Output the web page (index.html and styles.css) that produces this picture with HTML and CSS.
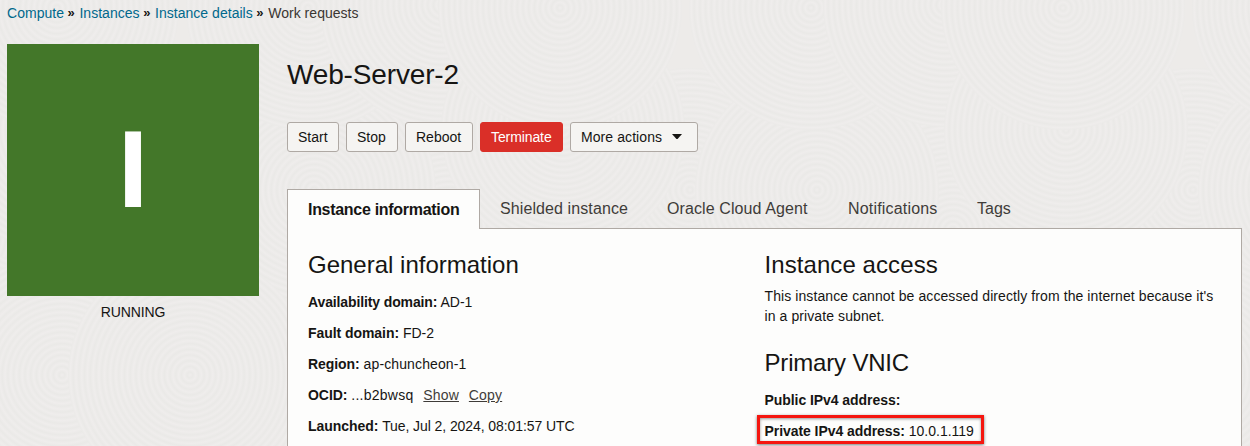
FILE: index.html
```html
<!DOCTYPE html>
<html lang="en">
<head>
<meta charset="utf-8">
<title>Web-Server-2</title>
<link rel="stylesheet" href="styles.css">
</head>
<body>
<svg class="texture" width="1250" height="446" aria-hidden="true">
  <defs>
    <radialGradient id="rings" gradientUnits="userSpaceOnUse" cx="0" cy="0" r="5.7" spreadMethod="repeat">
      <stop offset="0" stop-color="#efedec"/>
      <stop offset=".5" stop-color="#eae9e7"/>
      <stop offset="1" stop-color="#efedec"/>
    </radialGradient>
    <circle id="disc" r="122" fill="url(#rings)"/>
    <g id="tile">
      <use href="#disc" x="450" y="230"/>
      <use href="#disc" x="330" y="320"/>
      <use href="#disc" x="460" y="370"/>
      <use href="#disc" x="187" y="190"/>
      <use href="#disc" x="314" y="190"/>
      <use href="#disc" x="60" y="130"/>
      <use href="#disc" x="290" y="480"/>
      <use href="#disc" x="62" y="375"/>
      <use href="#disc" x="190" y="375"/>
      <use href="#disc" x="57" y="8"/>
      <use href="#disc" x="308" y="8"/>
      <use href="#disc" x="442" y="5"/>
    </g>
  </defs>
  <use href="#tile" x="-503"/>
  <use href="#tile"/>
  <use href="#tile" x="503"/>
  <use href="#tile" x="1006"/>
</svg>
<nav class="crumbs">
  <a>Compute</a><b>»</b><a>Instances</a><b>»</b><a>Instance details</a><b>»</b><span>Work requests</span>
</nav>
<div class="layout">
  <aside class="status">
    <div class="tile">I</div>
    <p>RUNNING</p>
  </aside>
  <main class="main">
    <h1>Web-Server-2</h1>
    <div class="actions">
      <button class="start">Start</button>
      <button class="stop">Stop</button>
      <button class="reboot">Reboot</button>
      <button class="danger">Terminate</button>
      <button class="more">More actions <svg width="10" height="6" viewBox="0 0 10 6"><path d="M0 0h10L6 4.5Q5 5.5 4 4.5z" fill="#161513"/></svg></button>
    </div>
    <div class="tabs">
      <div class="tab active"><span>Instance information</span></div>
      <div class="tab t2"><span>Shielded instance</span></div>
      <div class="tab t3"><span>Oracle Cloud Agent</span></div>
      <div class="tab t4"><span>Notifications</span></div>
      <div class="tab t5"><span>Tags</span></div>
    </div>
    <div class="panel">
      <section class="col general">
        <h2>General information</h2>
        <p><b class="avail">Availability domain:</b> AD-1</p>
        <p><b>Fault domain:</b> FD-2</p>
        <p><b>Region:</b> <span class="region">ap-chuncheon-1</span></p>
        <p><b>OCID:</b> <span class="ocid">...b2bwsq</span> <a>Show</a> <a>Copy</a></p>
        <p><b>Launched:</b> <span class="tight">Tue, Jul 2, 2024, 08:01:57 UTC</span></p>
      </section>
      <section class="col access">
        <h2>Instance access</h2>
        <div class="note">This instance cannot be accessed directly from the internet because it's<br>in a private subnet.</div>
        <h2 class="vnic">Primary VNIC</h2>
        <p><b>Public IPv4 address:</b></p>
        <p class="marked"><b>Private IPv4 address:</b> 10.0.1.119</p>
      </section>
    </div>
  </main>
</div>
</body>
</html>
```
FILE: styles.css
```css
* { box-sizing: border-box; }
body {
  margin: 0;
  width: 1250px;
  height: 446px;
  overflow: hidden;
  background: #edebe9;
  font-family: "Liberation Sans", Arial, sans-serif;
  font-size: 14px;
  line-height: 20px;
  color: #161513;
}
.texture { position: absolute; inset: 0; z-index: -1; }
p, h1, h2 { margin: 0; font-weight: 400; }
.crumbs { display: flex; height: 44px; padding: 3px 0 0 7px; color: #3a3632; letter-spacing: .03px; white-space: nowrap; }
.crumbs a { color: #00688c; }
.crumbs b { width: 15.4px; padding-left: 3.5px; font-size: 13px; color: #161513; }
.layout { display: flex; gap: 28px; padding-left: 7px; }
.status { width: 252px; text-align: center; }
.status p { padding-top: 6px; letter-spacing: -.1px; }
.tile {
  height: 252px;
  background: #437729;
  color: #fff;
  font-size: 110px;
  font-weight: 700;
  line-height: 249px;
}
.main { width: 955px; }
h1 { height: 78px; padding-top: 14px; font-size: 28px; line-height: 34px; letter-spacing: -.15px; }
.actions { display: flex; gap: 7px; height: 67px; }
.actions button {
  height: 30px;
  padding: 0 10px;
  border: 1px solid #afa9a4;
  border-radius: 3px;
  background: #f5f4f2;
  font: inherit;
  color: #161513;
  white-space: nowrap;
  text-align: left;
}
.actions .start, .actions .stop { width: 52px; }
.actions .reboot { width: 68px; }
.actions .danger { width: 83px; border-color: #da2f28; background: #da2f28; color: #fff; letter-spacing: -.1px; }
.actions .more { display: flex; align-items: center; justify-content: space-between; width: 128px; padding-right: 15px; letter-spacing: .08px; }
.tabs { display: flex; height: 40px; font-size: 16px; color: #3f3c39; letter-spacing: .1px; }
.tab { height: 40px; padding: 10px 20px 0; white-space: nowrap; }
.tab.active {
  z-index: 1;
  width: 193px;
  border: 1px solid #afa9a4;
  border-bottom: 0;
  background: #fdfdfc;
  color: #161513;
  font-weight: 700;
  letter-spacing: -.3px;
}
.t2 { width: 167px; }
.t3 { width: 181px; }
.t4 { width: 129px; letter-spacing: .18px; }
.t5 { letter-spacing: 0; }
.panel {
  display: flex;
  height: 240px;
  margin-top: -1px;
  padding: 20px 0 0 20px;
  border: 1px solid #afa9a4;
  background: #fdfdfc;
}
.general { width: 456.5px; }
.access { width: 460px; }
h2 { height: 43px; font-size: 24px; line-height: 32px; }
.access h2 { letter-spacing: .08px; }
.col p { height: 31px; white-space: nowrap; }
.col b { letter-spacing: -.06px; }
.col .avail { letter-spacing: -.12px; }
.region { letter-spacing: .12px; }
.ocid { letter-spacing: .25px; }
.tight { letter-spacing: -.08px; }
.general a { margin-left: 6px; text-decoration: underline; color: #3f3c39; letter-spacing: .15px; }
.note { height: 61px; margin-top: -6px; letter-spacing: .09px; white-space: nowrap; }
.col .vnic { height: 43px; letter-spacing: -.18px; }
.col .marked {
  width: 227px;
  height: 29px;
  margin: -6px 0 0 -8px;
  padding: 3px 5px 0;
  border: 3px solid #f5160f;
  box-shadow: 0 1px 3px #0008, inset 0 1px 3px #0006;
}
```
